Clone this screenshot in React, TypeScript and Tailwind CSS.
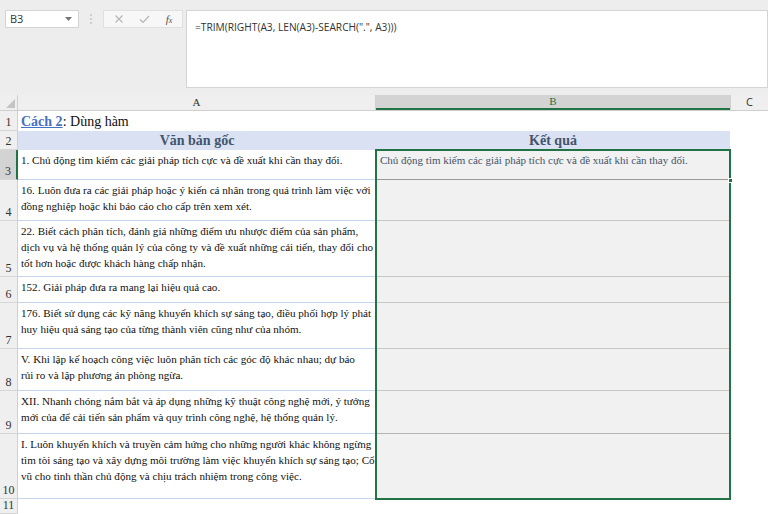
import React from "react";

const serif = { fontFamily: '"Liberation Serif", "Times New Roman", serif' };
const sans = { fontFamily: '"Open Sans", "Noto Sans", sans-serif' };

type Row = { n: number; h: string; a: string[]; b?: string; bBorder: string };

const rows: Row[] = [
  {
    n: 3,
    h: "h-[30px]",
    a: ["1. Chủ động tìm kiếm các giải pháp tích cực và đề xuất khi cần thay đổi."],
    b: "Chủ động tìm kiếm các giải pháp tích cực và đề xuất khi cần thay đổi.",
    bBorder: "border-[#9a9a9a]",
  },
  {
    n: 4,
    h: "h-[41px]",
    a: [
      "16. Luôn đưa ra các giải pháp hoặc ý kiến cá nhân trong quá trình làm việc với",
      "đồng nghiệp hoặc khi báo cáo cho cấp trên xem xét.",
    ],
    bBorder: "border-[#c6c6c6]",
  },
  {
    n: 5,
    h: "h-[56px]",
    a: [
      "22. Biết cách phân tích, đánh giá những điểm ưu nhược điểm của sản phẩm,",
      "dịch vụ và hệ thống quản lý của công ty và đề xuất những cải tiến, thay đổi cho",
      "tốt hơn hoặc được khách hàng chấp nhận.",
    ],
    bBorder: "border-[#c6c6c6]",
  },
  {
    n: 6,
    h: "h-[26px]",
    a: ["152. Giải pháp đưa ra mang lại hiệu quả cao."],
    bBorder: "border-[#c6c6c6]",
  },
  {
    n: 7,
    h: "h-[46px]",
    a: [
      "176. Biết sử dụng các kỹ năng khuyến khích sự sáng tạo, điều phối hợp lý phát",
      "huy hiệu quả sáng tạo của từng thành viên cũng như của nhóm.",
    ],
    bBorder: "border-[#c6c6c6]",
  },
  {
    n: 8,
    h: "h-[42px]",
    a: [
      "V. Khi lập kế hoạch công việc luôn phân tích các góc độ khác nhau; dự báo",
      "rủi ro và lập phương án phòng ngừa.",
    ],
    bBorder: "border-[#c6c6c6]",
  },
  {
    n: 9,
    h: "h-[43px]",
    a: [
      "XII. Nhanh chóng nắm bắt và áp dụng những kỹ thuật công nghệ mới, ý tưởng",
      "mới của để cải tiến sản phẩm và quy trình công nghệ, hệ thống quản lý.",
    ],
    bBorder: "border-[#b4b4b4]",
  },
  {
    n: 10,
    h: "h-[65px]",
    a: [
      "I. Luôn khuyến khích và truyền cảm hứng cho những người khác không ngừng",
      "tìm tòi sáng tạo và xây dựng môi trường làm việc khuyến khích sự sáng tạo; Cổ",
      "vũ cho tinh thần chủ động và chịu trách nhiệm trong công việc.",
    ],
    bBorder: "border-[#c6c6c6]",
  },
];

function RowNum({ n, active }: { n: number; active?: boolean }) {
  return (
    <div
      className={`w-[18px] shrink-0 h-full flex items-end justify-center pb-[1px] text-[12px] leading-[14px] text-[#333] border-b border-[#d6d6d6] ${
        active ? "bg-[#d3d3d3] border-r-2 border-r-[#217346]" : "bg-[#efefef] border-r border-r-[#cfcfcf]"
      }`}
      style={serif}
    >
      {n}
    </div>
  );
}

export default function App() {
  return (
    <div className="w-[768px] h-[514px] overflow-hidden bg-white flex flex-col relative">
      {/* Top: name box + formula bar */}
      <div className="h-[95px] shrink-0 bg-[#ededed] flex items-start pt-[10px] pl-[5px] gap-0">
        <div className="w-[74px] h-[18px] bg-white border border-[#d4d4d4] flex items-center justify-between px-[4px]">
          <span className="text-[11px] text-[#333]" style={sans}>
            B3
          </span>
          <svg width="7" height="4" viewBox="0 0 7 4" className="mr-[2px]">
            <path d="M0 0 L7 0 L3.5 4 Z" fill="#777" />
          </svg>
        </div>
        <div className="w-[24px] h-[18px] flex items-center justify-center">
          <svg width="2" height="10" viewBox="0 0 2 10">
            <circle cx="1" cy="1" r="0.8" fill="#aaa" />
            <circle cx="1" cy="5" r="0.8" fill="#aaa" />
            <circle cx="1" cy="9" r="0.8" fill="#aaa" />
          </svg>
        </div>
        <div className="w-[80px] h-[18px] bg-[#f7f7f7] border border-[#e0e0e0] flex items-center justify-around px-[2px]">
          <svg width="10" height="10" viewBox="0 0 10 10">
            <path d="M1.5 1.5 L8.5 8.5 M8.5 1.5 L1.5 8.5" stroke="#b5b5b5" strokeWidth="1.1" />
          </svg>
          <svg width="11" height="9" viewBox="0 0 11 9">
            <path d="M1 4.5 L4 7.5 L10 1" stroke="#b5b5b5" strokeWidth="1.2" fill="none" />
          </svg>
          <span className="text-[11px] italic text-[#555]" style={serif}>
            f<span className="text-[8px]">x</span>
          </span>
        </div>
        <div className="ml-[3px] flex-1 h-[78px] bg-white border border-[#d4d4d4] pl-[8px] pt-[2px]">
          <span className="text-[10.2px] text-[#333]" style={sans}>
            =TRIM(RIGHT(A3, LEN(A3)-SEARCH(".", A3)))
          </span>
        </div>
      </div>

      {/* Column headers */}
      <div className="h-[16px] shrink-0 flex bg-[#efefef] border-b border-[#cfcfcf]">
        <div className="w-[18px] shrink-0 h-full border-r border-[#cfcfcf] flex items-end justify-end p-[2px]">
          <svg width="9" height="9" viewBox="0 0 9 9">
            <path d="M9 0 L9 9 L0 9 Z" fill="#c4c4c4" />
          </svg>
        </div>
        <div
          className="w-[358px] shrink-0 h-full border-r border-[#cfcfcf] flex items-center justify-center text-[11px] text-[#333]"
          style={serif}
        >
          A
        </div>
        <div
          className="w-[354px] shrink-0 h-full bg-[#d3d3d3] border-b-2 border-[#217346] flex items-center justify-center text-[11px] text-[#217346]"
          style={serif}
        >
          B
        </div>
        <div
          className="flex-1 h-full border-l border-[#cfcfcf] flex items-center justify-center text-[11px] text-[#333]"
          style={sans}
        >
          C
        </div>
      </div>

      {/* Row 1 */}
      <div className="h-[20px] shrink-0 flex">
        <RowNum n={1} />
        <div className="w-[358px] shrink-0 pl-[3px] pt-[2px] text-[14px] leading-[18px] text-[#111]" style={serif}>
          <span className="font-bold text-[#4472c4] underline">Cách 2</span>: Dùng hàm
        </div>
        <div className="flex-1" />
      </div>

      {/* Row 2 */}
      <div className="h-[19px] shrink-0 flex">
        <RowNum n={2} />
        <div
          className="w-[358px] shrink-0 bg-[#d9e1f2] flex items-center justify-center text-[14px] font-bold text-[#44546a]"
          style={serif}
        >
          Văn bản gốc
        </div>
        <div
          className="w-[354px] shrink-0 bg-[#d9e1f2] flex items-center justify-center text-[14px] font-bold text-[#44546a]"
          style={serif}
        >
          Kết quả
        </div>
        <div className="flex-1" />
      </div>

      {/* Data rows */}
      {rows.map((r) => (
        <div key={r.n} className={`${r.h} shrink-0 flex`}>
          <RowNum n={r.n} active={r.n === 3} />
          <div
            className="w-[358px] shrink-0 pl-[3px] pt-[2px] border-b border-[#c5d3ec] text-[11.1px] leading-[16px] text-[#111] whitespace-nowrap overflow-hidden"
            style={serif}
          >
            {r.a.map((l, i) => (
              <div key={i}>{l}</div>
            ))}
          </div>
          <div
            className={`w-[354px] shrink-0 bg-[#f1f1f1] border-b ${r.bBorder} pl-[4px] pt-[2px] text-[11px] leading-[16px] text-[#44546a] whitespace-nowrap overflow-hidden`}
            style={serif}
          >
            {r.b}
          </div>
          <div className="flex-1" />
        </div>
      ))}

      {/* Row 11 */}
      <div className="h-[15px] shrink-0 flex">
        <RowNum n={11} />
        <div className="flex-1" />
      </div>

      {/* Selection outline over B3:B10 */}
      <div className="absolute left-[375px] top-[149px] w-[356px] h-[351px] border-2 border-[#217346] pointer-events-none" />
      <div className="absolute left-[728px] top-[178px] w-[5px] h-[5px] bg-[#217346] border border-white pointer-events-none" />
    </div>
  );
}
